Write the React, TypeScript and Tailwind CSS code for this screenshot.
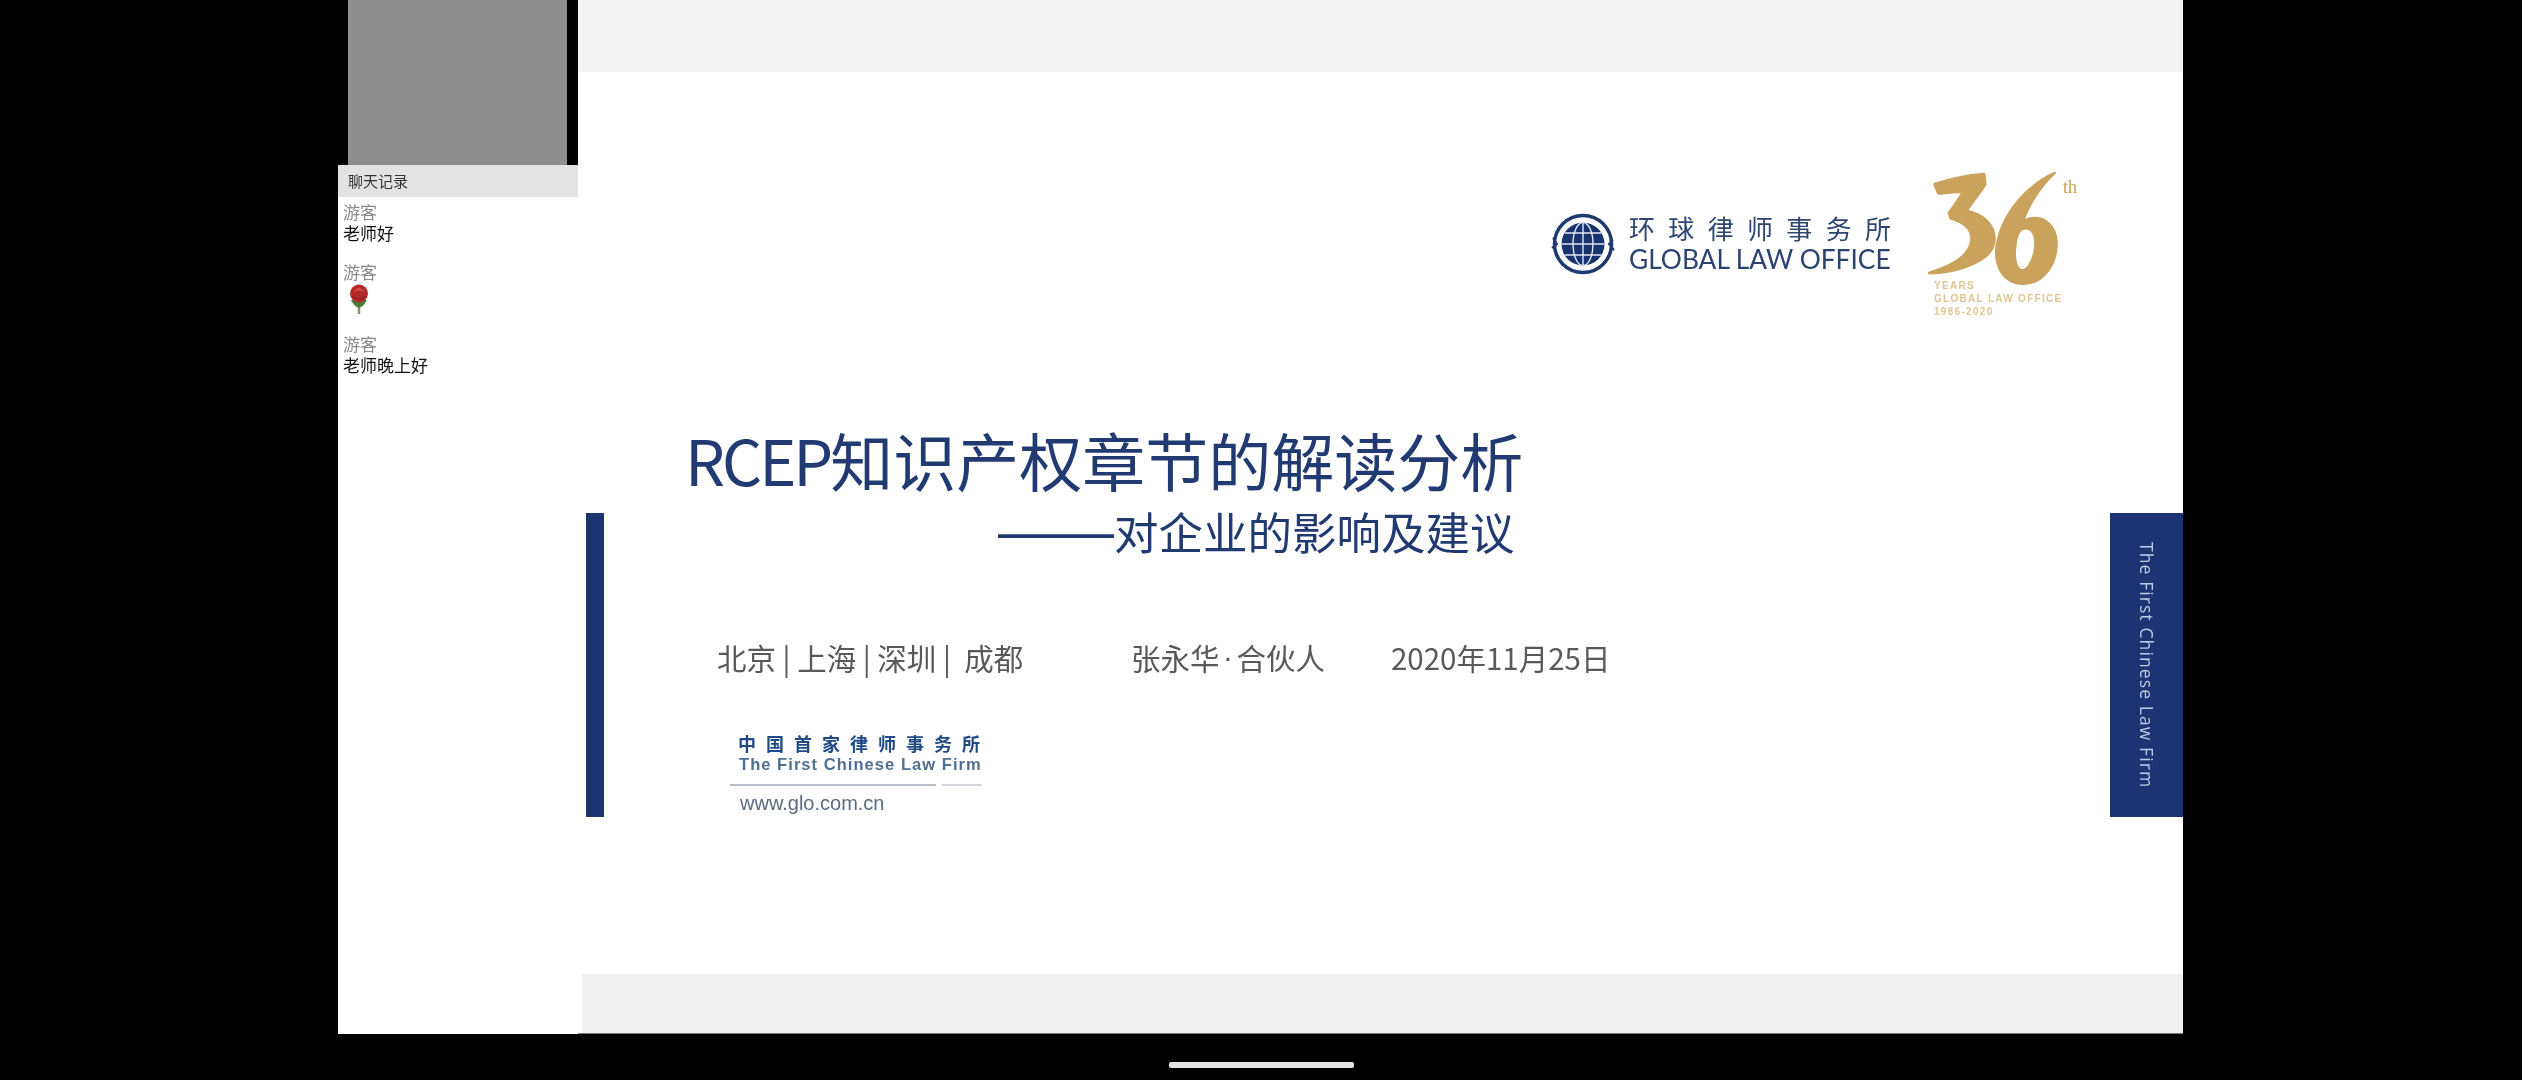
const cjk = "font-['Noto_Sans_CJK_SC','Noto_Sans',sans-serif]"

const messages = [
    { id: 1, text: '老师好' },
    { id: 2, rose: true },
    { id: 3, text: '老师晚上好' },
]

function Rose() {
    return (
        <svg width="22" height="32" viewBox="0 0 22 32" className="mb-[3px] ml-[5px] mt-[1px] block">
            <path d="M11 18 L11 31" stroke="#7f9a55" strokeWidth="2.5" />
            <path d="M3 17 C6 23 9 24 11 25 C13 24 16 23 19 17 Z" fill="#4f7a3a" />
            <circle cx="11" cy="10.5" r="9" fill="#b5282a" />
            <path d="M6 9 C8 4 14 4 16 9 C14 7 8 7 6 9 Z" fill="#d9504c" />
            <path d="M5 13 C8 17 14 17 17 13" fill="none" stroke="#8d1c1f" strokeWidth="1.2" />
        </svg>
    )
}

function Globe() {
    return (
        <svg width="64" height="64" viewBox="0 0 64 64" className="shrink-0">
            <circle cx="32" cy="32" r="28.5" fill="none" stroke="#1f3a6e" strokeWidth="3.5" />
            <path d="M2 26 L6 32 L1 36 M62 28 L58 32 L63 38" fill="none" stroke="#1f3a6e" strokeWidth="2" />
            <circle cx="32" cy="32" r="21.5" fill="#17346f" />
            <g fill="none" stroke="#dfe6f2" strokeWidth="1.4">
                <ellipse cx="32" cy="32" rx="10" ry="21.5" />
                <path d="M32 10.5 V53.5 M10.5 32 H53.5 M14 21 H50 M14 43 H50" />
            </g>
        </svg>
    )
}

function Anniversary() {
    return (
        <div className="relative ml-[43px] mt-[-42px] flex flex-col">
            <svg width="143" height="118" viewBox="1100 70 400 330" className="-ml-[8px] block">
                <path
                    fill="#c9a25c"
                    stroke="#c9a25c"
                    strokeWidth="9"
                    strokeLinejoin="round"
                    d="M1125 110 C1170 95 1220 85 1262 82 L1265 110 C1245 140 1225 165 1212 185 C1260 195 1295 225 1290 270 C1285 320 1200 355 1110 358 C1170 340 1225 310 1228 265 C1230 235 1205 215 1170 205 L1165 190 C1180 170 1195 150 1205 130 C1175 130 1145 135 1135 135 Z"
                />
                <path
                    fill="#c9a25c"
                    fillRule="evenodd"
                    stroke="#c9a25c"
                    strokeWidth="7"
                    strokeLinejoin="round"
                    d="M1460 78 C1390 110 1320 180 1300 270 C1285 340 1320 388 1372 388 C1430 388 1468 330 1465 270 C1462 225 1430 200 1395 205 L1372 212 C1385 170 1420 115 1460 78 Z M1368 235 C1395 225 1410 250 1405 290 C1400 330 1380 355 1365 350 C1350 345 1345 310 1350 280 C1352 260 1358 242 1368 235 Z"
                />
            </svg>
            <span className="absolute left-[129px] top-[8px] font-['Liberation_Serif',serif] text-[18px] leading-none text-[#c9a25c]">th</span>
            <div className="-mt-[9px] whitespace-nowrap font-['Liberation_Sans',sans-serif] text-[10px] font-bold leading-[13px] tracking-[1.3px] text-[#dcc694]">
                <div>YEARS</div>
                <div>GLOBAL LAW OFFICE</div>
                <div>1986-2020</div>
            </div>
        </div>
    )
}

export default function App() {
    return (
        <div lang="zh-CN" className={`h-[1080px] w-[2522px] overflow-hidden bg-black ${cjk}`}>
            <div className="flex h-[1034px] pl-[338px] pr-[339px]">
                <div className="flex w-[240px] shrink-0 flex-col">
                    <div className="h-[165px] shrink-0 pl-[10px] pr-[11px]">
                        <div className="h-full bg-[#8e8e8e]" />
                    </div>
                    <div className="flex-1 bg-white blur-[0.5px]">
                        <div className="flex h-[32px] items-center bg-[#e3e3e3] pl-[10px] text-[15px] text-[#333]">聊天记录</div>
                        <div className="pl-[5px] pt-[4px] text-[17px] leading-[21px]">
                            {messages.map(m => (
                                <div key={m.id} className="mb-[18px]">
                                    <div className="text-[#8a8a8a]">游客</div>
                                    {m.rose ? <Rose /> : <div className="text-[#111]">{m.text}</div>}
                                </div>
                            ))}
                        </div>
                    </div>
                </div>

                <div className="flex min-w-0 flex-1 flex-col border-b border-[#777] bg-white">
                    <div className="h-[72px] shrink-0 bg-[#f3f3f3]" />
                    <div className="flex flex-1 pl-[8px]">
                        <div className="mt-[441px] h-[304px] w-[18px] shrink-0 bg-[#1c3474]" />
                        <div className="min-w-0 flex-1 blur-[0.6px]">
                            <div className="flex items-start justify-end pr-[41px] pt-[140px]">
                                <div className="flex items-center gap-[14px]">
                                    <Globe />
                                    <div className="w-[262px]">
                                        <div className="flex justify-between text-[26px] leading-[30px] text-[#2d4672]">
                                            {'环球律师事务所'.split('').map(c => (
                                                <span key={c}>{c}</span>
                                            ))}
                                        </div>
                                        <div className="whitespace-nowrap font-['Lato',sans-serif] text-[26.3px] leading-[32px] text-[#2a4370]">GLOBAL LAW OFFICE</div>
                                    </div>
                                </div>
                                <Anniversary />
                            </div>

                            <div className="mt-[101px] whitespace-nowrap pl-[81px] text-[63px] leading-[80px] text-[#223a72]">
                                <span className="tracking-[-3px]">RCEP</span>知识产权章节的解读分析
                            </div>
                            <div className="flex h-[64px] items-center whitespace-nowrap pl-[394px] text-[44.5px] leading-[64px] text-[#223a72]">
                                <span className="w-[116px] font-['Liberation_Sans',sans-serif] text-[58px] leading-none">——</span>
                                <span>对企业的影响及建议</span>
                            </div>

                            <div className="mt-[74px] flex whitespace-nowrap pl-[113px] text-[29.5px] leading-[40px] text-[#595959]">
                                <span className="w-[414px]">北京 | 上海 | 深圳 |&nbsp; 成都</span>
                                <span className="flex w-[260px]">
                                    张永华
                                    <span className="w-[17px] text-center font-['Liberation_Sans',sans-serif]">·</span>
                                    合伙人
                                </span>
                                <span>2020年11月25日</span>
                            </div>

                            <div className="ml-[126px] mt-[55px] w-[252px]">
                                <div className="flex justify-between pl-[8px] pr-[2px] text-[18px] font-bold leading-[22px] text-[#1f4a86]">
                                    {'中国首家律师事务所'.split('').map((c, i) => (
                                        <span key={i}>{c}</span>
                                    ))}
                                </div>
                                <div className="whitespace-nowrap pl-[9px] font-['Liberation_Sans',sans-serif] text-[16.5px] font-bold leading-[20px] tracking-[1.05px] text-[#4f6f93]">The First Chinese Law Firm</div>
                                <div className="mt-[10px] flex gap-[6px]">
                                    <div className="h-[2px] flex-1 bg-[#b8bec8]" />
                                    <div className="h-[2px] w-[40px] bg-[#d5d8de]" />
                                </div>
                                <div className="mt-[4px] pl-[10px] font-['Liberation_Sans',sans-serif] text-[20px] leading-[26px] text-[#5b6b80]">www.glo.com.cn</div>
                            </div>
                        </div>
                        <div className="mt-[441px] flex h-[304px] w-[73px] shrink-0 items-center justify-center bg-[#1c3474]">
                            <span className="whitespace-nowrap font-['Open_Sans',sans-serif] text-[17.5px] font-medium tracking-[1.1px] text-[#bccbe6] blur-[0.4px] [writing-mode:vertical-rl]">The First Chinese Law Firm</span>
                        </div>
                    </div>
                    <div className="ml-[4px] h-[59px] shrink-0 bg-[#f2f1f1]" />
                </div>
            </div>
            <div className="flex justify-center pt-[28px]">
                <div className="h-[6px] w-[185px] rounded-[2px] bg-[#e4e4e4]" />
            </div>
        </div>
    )
}
